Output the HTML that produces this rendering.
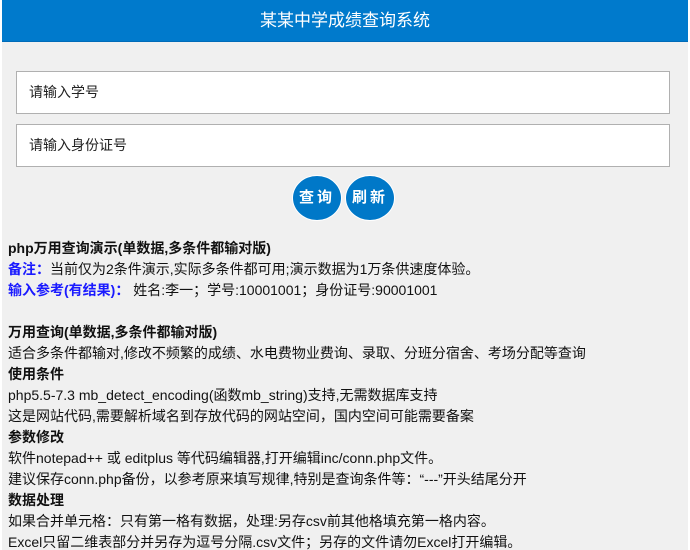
<!DOCTYPE html>
<html><head><meta charset="utf-8"><style>
html,body{margin:0;padding:0;width:690px;height:550px;overflow:hidden;background:#fff}
.wrap{position:absolute;left:2px;top:0;width:686px;height:550px;background:#f0f0f0;overflow:hidden;font-family:"Liberation Sans","Noto Sans CJK SC",sans-serif}
.hd{height:41px;background:#007acc;color:#fff;text-align:center;font-size:17px;line-height:41px;border-bottom:1px solid #006bb8}
.inp{position:absolute;left:14px;background:#fff;border:1px solid #b0b0b0;font-size:14px;line-height:40px;padding-left:12px;box-sizing:border-box;width:654px;height:43px;color:#222}
.btn{position:absolute;top:175px;width:48px;height:44px;border-radius:50%;background:#0078c8;color:#fff;font-size:15px;font-weight:bold;text-align:center;line-height:44px;letter-spacing:3px;border:1px solid #fff}
.txt{position:absolute;left:6px;top:238px;font-size:14px;line-height:21px;color:#111;white-space:nowrap}
b{font-weight:bold}.bl{color:#1a1aff;font-weight:bold}
</style></head><body><div class="wrap">
<div class="hd">某某中学成绩查询系统</div>
<div class="inp" style="top:71px">请输入学号</div>
<div class="inp" style="top:124px">请输入身份证号</div>
<div class="btn" style="left:290px">查询</div>
<div class="btn" style="left:343px">刷新</div>
<div class="txt">
<b>php万用查询演示(单数据,多条件都输对版)</b><br>
<span class="bl">备注：</span>当前仅为2条件演示,实际多条件都可用;演示数据为1万条供速度体验。<br>
<span class="bl">输入参考(有结果)：</span> 姓名:李一；学号:10001001；身份证号:90001001<br>
<br>
<b>万用查询(单数据,多条件都输对版)</b><br>
适合多条件都输对,修改不频繁的成绩、水电费物业费询、录取、分班分宿舍、考场分配等查询<br>
<b>使用条件</b><br>
php5.5-7.3 mb_detect_encoding(函数mb_string)支持,无需数据库支持<br>
这是网站代码,需要解析域名到存放代码的网站空间，国内空间可能需要备案<br>
<b>参数修改</b><br>
软件notepad++ 或 editplus 等代码编辑器,打开编辑inc/conn.php文件。<br>
建议保存conn.php备份，以参考原来填写规律,特别是查询条件等：“---”开头结尾分开<br>
<b>数据处理</b><br>
如果合并单元格：只有第一格有数据，处理:另存csv前其他格填充第一格内容。<br>
Excel只留二维表部分并另存为逗号分隔.csv文件；另存的文件请勿Excel打开编辑。
</div>
</div></body></html>
